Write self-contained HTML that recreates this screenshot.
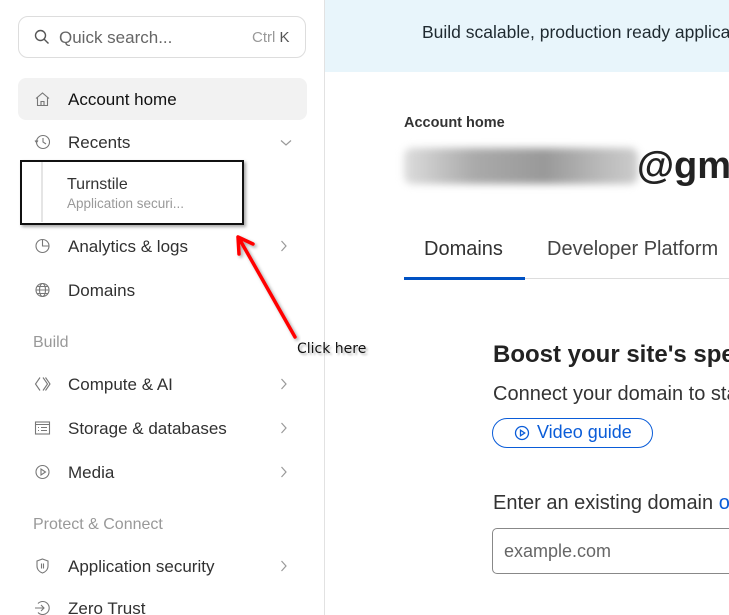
<!DOCTYPE html>
<html><head><style>
*{box-sizing:border-box;margin:0;padding:0}
html,body{width:729px;height:615px;overflow:hidden}
body{background:#fff;font-family:"Liberation Sans",sans-serif;color:#36393a}
#w{position:relative;width:729px;height:615px;overflow:hidden}
.a{position:absolute;white-space:nowrap}
.nav{position:absolute;left:68px;font-size:17px;color:#313131;transform:translateY(-50%)}
.ic{position:absolute;left:34px;width:17px;height:17px;transform:translateY(-50%)}
.ch{position:absolute;left:280px;transform:translateY(-50%)}
.sec{position:absolute;left:33px;font-size:16px;color:#999;transform:translateY(-50%)}
</style></head><body><div id="w">
<!-- sidebar -->
<div class="a" style="left:324px;top:0;width:1px;height:615px;background:#e2e2e2"></div>
<div class="a" style="left:18px;top:16px;width:288px;height:42px;border:1px solid #ddd;border-radius:10px"></div>
<svg class="a" style="left:34px;top:29px" width="16" height="16" viewBox="0 0 16 16" fill="none" stroke="#555" stroke-width="1.4"><circle cx="6.5" cy="6.5" r="5"/><path d="M10.2 10.2L14.5 14.5"/></svg>
<div class="a" style="left:59px;top:28px;font-size:17px;color:#666">Quick search...</div>
<div class="a" style="left:252px;top:29px;font-size:15px;color:#999">Ctrl <span style="color:#555">K</span></div>

<div class="a" style="left:18px;top:78px;width:289px;height:42px;background:#f2f2f2;border-radius:8px"></div>
<svg class="ic" style="top:99px" viewBox="0 0 17 17" fill="none" stroke="#777" stroke-width="1.1"><path d="M2 8L8.5 2.5L15 8M3.5 7V15H13.5V7M7 15V11H10V15"/></svg>
<div class="nav" style="top:100px;color:#111">Account home</div>
<svg class="ic" style="top:142px" viewBox="0 0 17 17" fill="none" stroke="#777" stroke-width="1.1"><circle cx="9" cy="8.5" r="6.5"/><path d="M9 4.5V8.5L12 10.5M1 7L2.5 9L4 7"/></svg>
<div class="nav" style="top:143px">Recents</div>
<svg class="ch" style="top:143px" width="12" height="8" viewBox="0 0 12 8" fill="none" stroke="#999" stroke-width="1.2"><path d="M1 1.5L6 6L11 1.5"/></svg>

<div class="a" style="left:41px;top:162px;width:2px;height:60px;background:#e5e5e5"></div>
<div class="a" style="left:20px;top:160px;width:224px;height:65px;border:2px solid #111;box-shadow:2px 2px 3px rgba(0,0,0,.35)"></div>
<div class="a" style="left:67px;top:176px;font-size:16px;color:#333">Turnstile</div>
<div class="a" style="left:67px;top:196px;font-size:13.5px;color:#999">Application securi...</div>

<svg class="ic" style="top:246px" viewBox="0 0 17 17" fill="none" stroke="#777" stroke-width="1.1"><circle cx="8.5" cy="8.5" r="6.5"/><path d="M8.5 2V8.5H15"/></svg>
<div class="nav" style="top:247px">Analytics &amp; logs</div>
<svg class="ch" style="top:246px" width="8" height="12" viewBox="0 0 8 12" fill="none" stroke="#999" stroke-width="1.2"><path d="M1.5 1L6 6L1.5 11"/></svg>
<svg class="ic" style="top:290px" viewBox="0 0 17 17" fill="none" stroke="#777" stroke-width="1.1"><circle cx="8.5" cy="8.5" r="6.5"/><ellipse cx="8.5" cy="8.5" rx="3" ry="6.5"/><path d="M2 8.5H15M3 5H14M3 12H14"/></svg>
<div class="nav" style="top:291px">Domains</div>

<div class="sec" style="top:343px">Build</div>
<svg class="ic" style="top:384px" viewBox="0 0 17 17" fill="none" stroke="#777" stroke-width="1.1"><path d="M6 2L1.5 8.5L6 15M9 2L13.5 8.5L9 15M11.5 2L16 8.5L11.5 15"/></svg>
<div class="nav" style="top:385px">Compute &amp; AI</div>
<svg class="ch" style="top:384px" width="8" height="12" viewBox="0 0 8 12" fill="none" stroke="#999" stroke-width="1.2"><path d="M1.5 1L6 6L1.5 11"/></svg>
<svg class="ic" style="top:428px" viewBox="0 0 17 17" fill="none" stroke="#777" stroke-width="1.1"><rect x="1.5" y="2.5" width="14" height="12"/><path d="M1.5 5H15.5M4 8H5M7 8H13M4 11H5M7 11H13"/></svg>
<div class="nav" style="top:429px">Storage &amp; databases</div>
<svg class="ch" style="top:428px" width="8" height="12" viewBox="0 0 8 12" fill="none" stroke="#999" stroke-width="1.2"><path d="M1.5 1L6 6L1.5 11"/></svg>
<svg class="ic" style="top:472px" viewBox="0 0 17 17" fill="none" stroke="#777" stroke-width="1.1"><circle cx="8.5" cy="8.5" r="6.5"/><path d="M7 5.5V11.5L11.5 8.5Z"/></svg>
<div class="nav" style="top:473px">Media</div>
<svg class="ch" style="top:472px" width="8" height="12" viewBox="0 0 8 12" fill="none" stroke="#999" stroke-width="1.2"><path d="M1.5 1L6 6L1.5 11"/></svg>

<div class="sec" style="top:525px">Protect &amp; Connect</div>
<svg class="ic" style="top:566px" viewBox="0 0 17 17" fill="none" stroke="#777" stroke-width="1.1"><path d="M8.5 1.5L14 3.5V8.5C14 12 11.5 14.5 8.5 15.5C5.5 14.5 3 12 3 8.5V3.5Z"/><path d="M7.5 6V11M9.5 6V11"/></svg>
<div class="nav" style="top:567px">Application security</div>
<svg class="ch" style="top:566px" width="8" height="12" viewBox="0 0 8 12" fill="none" stroke="#999" stroke-width="1.2"><path d="M1.5 1L6 6L1.5 11"/></svg>
<svg class="ic" style="top:608px" viewBox="0 0 17 17" fill="none" stroke="#777" stroke-width="1.1"><path d="M4 4A6.5 6.5 0 1 1 4 13M1 8.5H10M7 5.5L10 8.5L7 11.5"/></svg>
<div class="nav" style="top:609px">Zero Trust</div>

<!-- arrow -->
<svg class="a" style="left:0;top:0" width="729" height="615"><defs><filter id="s"><feDropShadow dx="2" dy="2" stdDeviation="1.5" flood-opacity=".35"/></filter></defs>
<g filter="url(#s)" stroke="#f00" stroke-width="3.5" stroke-linecap="round" fill="none"><path d="M295 337L240 240M238 237L239 254M238 237L253 244"/></g></svg>
<div class="a" style="left:297px;top:341px;color:#111;text-shadow:2px 2px 2px rgba(0,0,0,.3);font-family:'DejaVu Sans',sans-serif;font-size:14px">Click here</div>

<!-- main -->
<div class="a" style="left:325px;top:0;width:404px;height:72px;background:#e8f5fb"></div>
<div class="a" style="left:422px;top:22px;font-size:17.5px;color:#1f2a30">Build scalable, production ready applications</div>
<div class="a" style="left:404px;top:115px;font-size:14.5px;font-weight:bold;color:#333">Account home</div>
<div class="a" style="left:404px;top:148px;width:234px;height:36px;background:linear-gradient(90deg,#ddd,#aaa 30%,#999 60%,#bbb 85%,#ccc);filter:blur(4px);border-radius:8px"></div>
<div class="a" style="left:637px;top:145px;font-size:38px;font-weight:bold;color:#222">@gmail.com</div>
<div class="a" style="left:424px;top:238px;font-size:20px;color:#313131">Domains</div>
<div class="a" style="left:547px;top:238px;font-size:20px;color:#444">Developer Platform</div>
<div class="a" style="left:404px;top:278px;width:325px;height:1px;background:#ddd"></div>
<div class="a" style="left:404px;top:277px;width:121px;height:3px;background:#0051c3"></div>
<div class="a" style="left:493px;top:341px;font-size:24px;font-weight:bold;color:#222">Boost your site's speed</div>
<div class="a" style="left:493px;top:383px;font-size:20px;color:#333">Connect your domain to start</div>
<div class="a" style="left:492px;top:418px;width:161px;height:30px;border:1.5px solid #0a5cd8;border-radius:15px"></div>
<svg class="a" style="left:514px;top:425px" width="16" height="16" viewBox="0 0 16 16" fill="none" stroke="#0a5cd8" stroke-width="1.3"><circle cx="8" cy="8" r="6.5"/><path d="M6.5 5.2V10.8L10.7 8Z"/></svg>
<div class="a" style="left:537px;top:422px;font-size:18px;color:#0a5cd8">Video guide</div>
<div class="a" style="left:493px;top:492px;font-size:20px;color:#333">Enter an existing domain <span style="color:#0a5cd8">or</span></div>
<div class="a" style="left:492px;top:528px;width:260px;height:46px;border:1px solid #888;border-radius:5px"></div>
<div class="a" style="left:504px;top:541px;font-size:18px;color:#666">example.com</div>
</div></body></html>
